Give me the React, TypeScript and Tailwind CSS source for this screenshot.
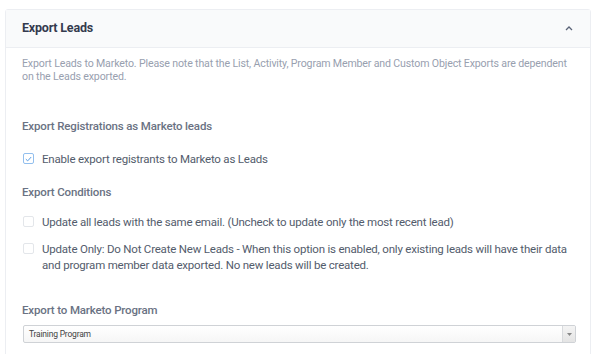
import React from "react";

function Check({ checked }: { checked?: boolean }) {
  return (
    <span
      className={
        "mt-[2px] flex h-[11px] w-[11px] shrink-0 items-center justify-center rounded-[2px] border " +
        (checked ? "border-[#92bfee] bg-white" : "border-[#e3e6ea] bg-white")
      }
    >
      {checked && (
        <svg width="7" height="6" viewBox="0 0 7 6" fill="none">
          <path d="M0.8 3.1 L2.7 4.9 L6.2 1" stroke="#5a9fe6" strokeWidth="1" />
        </svg>
      )}
    </span>
  );
}

export default function App() {
  return (
    <div
      className="h-[354px] w-[600px] overflow-hidden bg-white pl-[5px] pt-[9px]"
      style={{ fontFamily: "Roboto, 'Noto Sans', sans-serif" }}
    >
      <div className="h-[360px] w-[586px] rounded-t-[3px] border border-[#eceef2]">
        <div className="flex h-[38px] items-center justify-between border-b border-[#eceef2] bg-[#f9fafb] pl-[16px] pr-[17px]">
          <span className="text-[12.5px] font-bold tracking-[-0.2px] text-[#343b4e]">Export Leads</span>
          <svg width="8" height="5" viewBox="0 0 8 5" fill="none">
            <path d="M1 4 L4 1 L7 4" stroke="#5b6478" strokeWidth="1.3" />
          </svg>
        </div>
        <div className="pl-[16px] pr-[10px]">
          <p className="mr-[4px] mt-[9px] text-[10.6px] leading-[13px] tracking-[-0.15px] text-[#98a0af]">
            Export Leads to Marketo. Please note that the List, Activity, Program Member and Custom Object Exports are dependent on the Leads exported.
          </p>
          <div className="mt-[36px] text-[11.5px] font-medium leading-[14px] tracking-[-0.15px] text-[#6a7283]">
            Export Registrations as Marketo leads
          </div>
          <div className="mt-[18px] flex items-start gap-[8px] pl-[1px]">
            <Check checked />
            <span className="text-[11.5px] leading-[16px] tracking-[-0.2px] text-[#535c6c]">
              Enable export registrants to Marketo as Leads
            </span>
          </div>
          <div className="mt-[18px] text-[11.5px] font-medium leading-[14px] tracking-[-0.15px] text-[#6a7283]">
            Export Conditions
          </div>
          <div className="mt-[15px] flex items-start gap-[8px] pl-[1px]">
            <Check />
            <span className="text-[11.5px] leading-[16px] tracking-[-0.2px] text-[#535c6c]">
              Update all leads with the same email. (Uncheck to update only the most recent lead)
            </span>
          </div>
          <div className="mt-[11px] flex items-start gap-[8px] pl-[1px]">
            <Check />
            <span className="pr-[6px] text-[11.5px] leading-[16px] tracking-[-0.2px] text-[#535c6c]">
              Update Only: Do Not Create New Leads - When this option is enabled, only existing leads will have their data and program member data exported. No new leads will be created.
            </span>
          </div>
          <div className="mt-[30px] text-[11.5px] font-medium leading-[14px] tracking-[-0.15px] text-[#6a7283]">
            Export to Marketo Program
          </div>
          <div className="ml-[1px] mt-[8px] flex h-[18px] w-[553px] overflow-hidden rounded-[2px] border border-[#cfd2d6] bg-gradient-to-b from-white to-[#f6f6f6]">
            <span className="flex flex-1 items-center pl-[5px] text-[8.5px] tracking-[-0.2px] text-[#444]">
              Training Program
            </span>
            <span className="flex w-[13px] items-center justify-center border-l border-[#d8dadd] bg-gradient-to-b from-[#f4f4f4] to-[#e4e4e4]">
              <svg width="5" height="3" viewBox="0 0 5 3">
                <path d="M0 0 L5 0 L2.5 3 Z" fill="#888" />
              </svg>
            </span>
          </div>
        </div>
      </div>
    </div>
  );
}
